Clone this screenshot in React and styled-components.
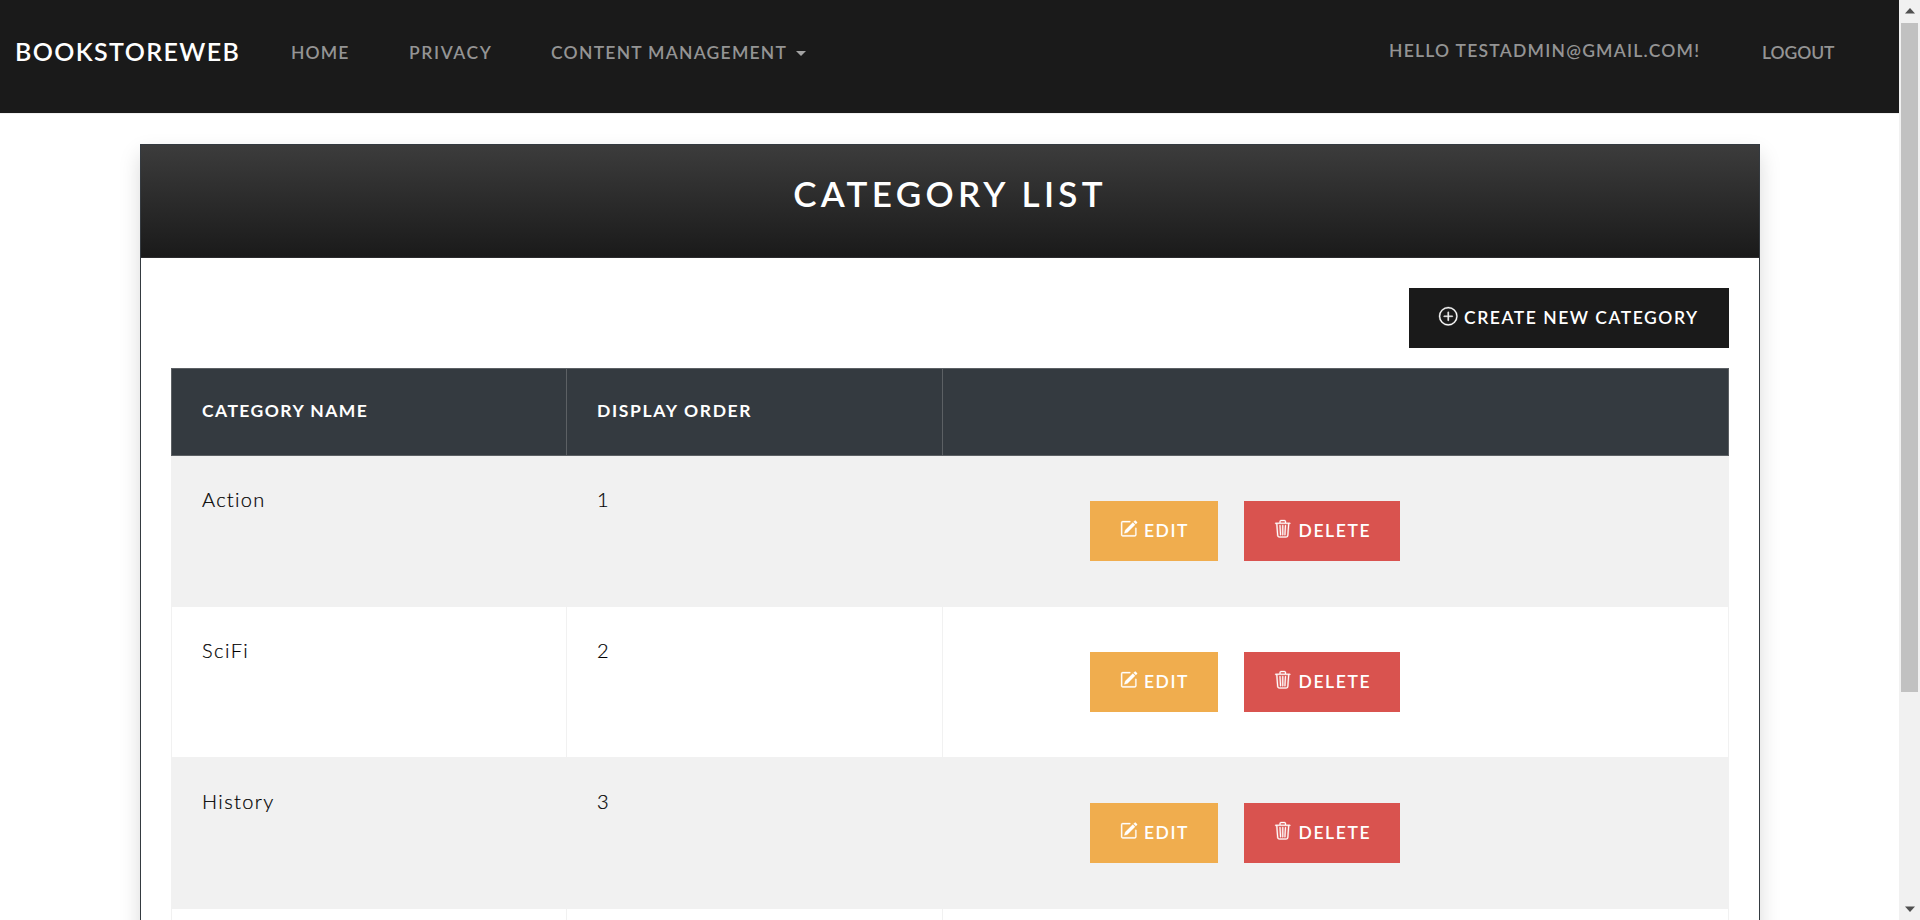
import React from 'react';
import styled, { createGlobalStyle } from 'styled-components';
import { BsPlusCircle, BsPencilSquare, BsTrash3 } from 'react-icons/bs';

const GlobalStyle = createGlobalStyle`
  * { box-sizing: border-box; }
  body { margin: 0; background: #fff; overflow: hidden; font-family: Lato, "Liberation Sans", sans-serif; }
`;

const Shell = styled.div`
  display: flex;
  width: 100%;
  height: 920px;
  overflow: hidden;
`;

const Page = styled.div`
  flex: 1;
  min-width: 0;
  overflow: hidden;
`;

const Navbar = styled.nav`
  display: flex;
  align-items: flex-start;
  height: 114px;
  padding: 32px 0 0 15px;
  background: #1a1a1a;
  border-bottom: 1px solid #f1f1f1;
`;

const Brand = styled.div`
  width: 276px;
  font-size: 25px;
  font-weight: 600;
  line-height: 38px;
  letter-spacing: 1.4px;
  color: #fff;
  white-space: nowrap;
`;

const NavItem = styled.div`
  display: flex;
  align-items: center;
  width: ${(p) => p.$width}px;
  margin-top: ${(p) => p.$top ?? 7}px;
  font-size: 17.5px;
  font-weight: 600;
  line-height: 28px;
  letter-spacing: ${(p) => p.$spacing}px;
  color: #949494;
  white-space: nowrap;
`;

const Spacer = styled.div`
  flex: 1;
`;

const Caret = styled.span`
  margin-left: 9px;
  border: 5px solid transparent;
  border-top-color: #a3a3a3;
  border-bottom: 0;
`;

const Card = styled.section`
  width: 1620px;
  height: 1100px;
  margin: 30px 0 0 140px;
  border: 1px solid #343a40;
  box-shadow: 0 10px 20px rgba(0, 0, 0, 0.15);
`;

const CardHeader = styled.header`
  height: 113px;
  padding-top: 27px;
  background: linear-gradient(#3c3c3c, #1a1a1a);
  border-bottom: 1px solid #2b2b2d;
  text-align: center;
`;

const Title = styled.h1`
  margin: 0;
  font-size: 35px;
  font-weight: 600;
  line-height: 42px;
  letter-spacing: 4.3px;
  color: #fff;
`;

const CardBody = styled.div`
  padding: 30px;
`;

const Toolbar = styled.div`
  display: flex;
  justify-content: flex-end;
  margin-bottom: 20px;
`;

const Button = styled.button`
  display: flex;
  align-items: center;
  width: ${(p) => p.$width}px;
  height: 60px;
  padding: 0 0 2px 30px;
  border: 0;
  background: ${(p) => p.$color};
  color: #fff;
  font-family: inherit;
  font-size: 17.5px;
  font-weight: 600;
  letter-spacing: ${(p) => p.$spacing}px;
  white-space: nowrap;

  svg {
    flex: none;
    margin: 0 ${(p) => p.$gap}px 2px 0;
    stroke: #fff;
    stroke-width: 0.3px;
    overflow: visible;
  }
`;

const columns = '395px 376px 1fr';

const HeadRow = styled.div`
  display: grid;
  grid-template-columns: ${columns};
  height: 88px;
  border: solid #5c6064;
  border-width: 1px 0 1px 1px;
  background: #343a40;
`;

const HeadCell = styled.div`
  padding: 28px 0 0 30px;
  border-right: 1px solid #5c6064;
  font-size: 17.5px;
  font-weight: 700;
  line-height: 28px;
  letter-spacing: ${(p) => p.$spacing}px;
  color: #fff;
`;

const Row = styled.div`
  display: grid;
  grid-template-columns: ${columns};
  height: 151px;
  border: solid #f1f1f1;
  border-width: 0 0 1px 1px;
  background: ${(p) => (p.$striped ? '#f1f1f1' : '#fff')};
`;

const Cell = styled.div`
  padding: 28px 0 0 30px;
  border-right: 1px solid #f1f1f1;
  font-size: 20px;
  font-weight: 300;
  line-height: 30px;
  letter-spacing: ${(p) => p.$spacing ?? 1.7}px;
  color: #000;
  -webkit-text-stroke: 0.2px #000;
`;

const ActionCell = styled.div`
  display: flex;
  gap: 26px;
  padding: 45px 0 0 147px;
  border-right: 1px solid #f1f1f1;
`;

const Scrollbar = styled.div`
  display: flex;
  flex-direction: column;
  align-items: center;
  width: 21px;
  padding: 8px 0;
  background: #f1f1f1;
`;

const Thumb = styled.div`
  width: 17px;
  height: 669px;
  margin: 9px 0 auto;
  background: #c1c1c1;
`;

const Arrow = styled.svg`
  display: block;
  width: 10px;
  height: 6px;
  fill: #505050;
`;

const categories = [
  { name: 'Action', order: 1, spacing: 1.3 },
  { name: 'SciFi', order: 2, spacing: 1.45 },
  { name: 'History', order: 3, spacing: 1.4 },
];

export default function App() {
  return (
    <Shell>
      <GlobalStyle />
      <Page>
        <Navbar>
          <Brand>BOOKSTOREWEB</Brand>
          <NavItem $width={118} $spacing={1.15}>HOME</NavItem>
          <NavItem $width={142} $spacing={1.6}>PRIVACY</NavItem>
          <NavItem $width={270} $spacing={1.25}>CONTENT MANAGEMENT<Caret /></NavItem>
          <Spacer />
          <NavItem $width={373} $spacing={1.25} $top={5}>HELLO TESTADMIN@GMAIL.COM!</NavItem>
          <NavItem $width={137} $spacing={-0.05}>LOGOUT</NavItem>
        </Navbar>
        <Card>
          <CardHeader>
            <Title>CATEGORY LIST</Title>
          </CardHeader>
          <CardBody>
            <Toolbar>
              <Button $width={320} $color="#1a1a1a" $spacing={1.53} $gap={6.5}>
                <BsPlusCircle size={18.5} />
                CREATE NEW CATEGORY
              </Button>
            </Toolbar>
            <HeadRow>
              <HeadCell $spacing={1.45}>CATEGORY NAME</HeadCell>
              <HeadCell $spacing={1.65}>DISPLAY ORDER</HeadCell>
              <HeadCell />
            </HeadRow>
            {categories.map((c, i) => (
              <Row key={c.name} $striped={i % 2 === 0}>
                <Cell $spacing={c.spacing}>{c.name}</Cell>
                <Cell>{c.order}</Cell>
                <ActionCell>
                  <Button $width={128} $color="#f0ad4e" $spacing={1.5} $gap={6.5}>
                    <BsPencilSquare size={17.5} />
                    EDIT
                  </Button>
                  <Button $width={156} $color="#d9534f" $spacing={1.6} $gap={7}>
                    <BsTrash3 size={17.5} />
                    DELETE
                  </Button>
                </ActionCell>
              </Row>
            ))}
            <Row>
              <Cell />
              <Cell />
              <Cell />
            </Row>
          </CardBody>
        </Card>
      </Page>
      <Scrollbar>
        <Arrow viewBox="0 0 10 6"><path d="M5 0 10 5.5H0Z" /></Arrow>
        <Thumb />
        <Arrow viewBox="0 0 10 6"><path d="M0 .5H10L5 6Z" /></Arrow>
      </Scrollbar>
    </Shell>
  );
}
